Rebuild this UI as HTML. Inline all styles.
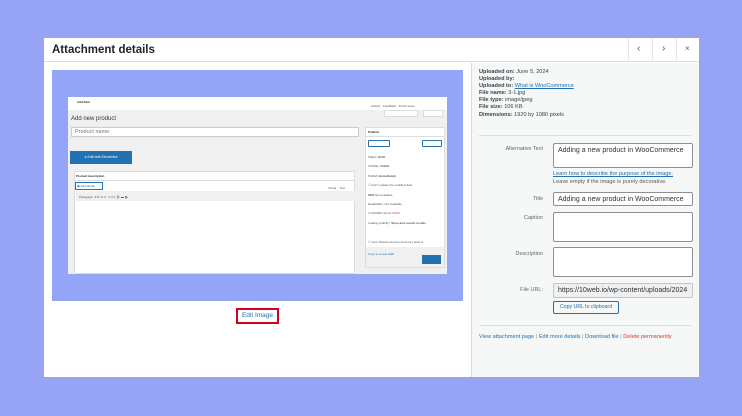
<!DOCTYPE html>
<html><head><meta charset="utf-8"><style>
*{box-sizing:border-box;margin:0;padding:0}
body{width:742px;height:416px;background:#97a4f6;font-family:"Liberation Sans",sans-serif;position:relative;overflow:hidden}
.a{position:absolute}
.modal{left:44px;top:38px;width:655px;height:339px;background:#fff}
.t{font-size:5.6px;color:#3c434a;white-space:nowrap}
.lbl{font-size:5.5px;color:#646970;text-align:right;width:60px;white-space:nowrap}
.in{background:#fff;border:1px solid #8c8f94;border-radius:2px;font-size:7px;color:#2c3338;padding:3px 4px;white-space:nowrap;overflow:hidden}
.g{background:#f0f0f1}
.w{background:#fff}
.s{font-size:3px;color:#50575e;white-space:nowrap}
</style></head><body>
<div class="a modal"></div>
<div class="a" style="left:44px;top:38px;width:655px;height:24px;border-bottom:1px solid #dcdcde;background:#fff"></div>
<div class="a" style="left:52px;top:44px;font-size:11.5px;font-weight:bold;color:#1d2327">Attachment details</div>
<div class="a" style="left:628px;top:38px;width:1px;height:24px;background:#e5e5e5"></div>
<div class="a" style="left:652px;top:38px;width:1px;height:24px;background:#e5e5e5"></div>
<div class="a" style="left:676px;top:38px;width:1px;height:24px;background:#e5e5e5"></div>
<div class="a" style="left:637px;top:43px;font-size:10px;color:#555">&#8249;</div>
<div class="a" style="left:662px;top:43px;font-size:10px;color:#555">&#8250;</div>
<div class="a" style="left:685px;top:44px;font-size:8px;color:#555">×</div>
<!-- right panel -->
<div class="a" style="left:471px;top:63px;width:228px;height:314px;background:#f6f7f7;border-left:1px solid #dcdcde"></div>
<div class="a t" style="left:479px;top:69px;line-height:7.1px">
<b>Uploaded on:</b> June 5, 2024<br><b>Uploaded by:</b><br><b>Uploaded to:</b> <span style="color:#2271b1;text-decoration:underline">What is WooCommerce</span><br><b>File name:</b> 3-1.jpg<br><b>File type:</b> image/jpeg<br><b>File size:</b> 106 KB<br><b>Dimensions:</b> 1920 by 1080 pixels</div>
<div class="a" style="left:479px;top:135px;width:212px;height:1px;background:#dcdcde"></div>
<div class="a lbl" style="left:483px;top:146px">Alternative Text</div>
<div class="a in" style="left:553px;top:143px;width:140px;height:25px">Adding a new product in WooCommerce</div>
<div class="a t" style="left:553px;top:171px;color:#2271b1;text-decoration:underline">Learn how to describe the purpose of the image.</div>
<div class="a t" style="left:553px;top:179px;color:#50575e">Leave empty if the image is purely decorative.</div>
<div class="a lbl" style="left:483px;top:196px">Title</div>
<div class="a in" style="left:553px;top:192px;width:140px;height:14px">Adding a new product in WooCommerce</div>
<div class="a lbl" style="left:483px;top:215px">Caption</div>
<div class="a in" style="left:553px;top:212px;width:140px;height:30px"></div>
<div class="a lbl" style="left:483px;top:251px">Description</div>
<div class="a in" style="left:553px;top:247px;width:140px;height:30px"></div>
<div class="a lbl" style="left:483px;top:287px">File URL:</div>
<div class="a in" style="left:553px;top:283px;width:140px;height:15px;background:#f0f0f1;border-color:#c3c4c7">https://10web.io/wp-content/uploads/2024</div>
<div class="a" style="left:553px;top:301px;width:66px;height:13px;border:1px solid #2271b1;border-radius:2px;background:#f6f7f7;font-size:5.2px;color:#2271b1;text-align:center;line-height:11px">Copy URL to clipboard</div>
<div class="a" style="left:479px;top:325px;width:212px;height:1px;background:#dcdcde"></div>
<div class="a t" style="left:479px;top:334px;font-size:5.6px;color:#2271b1">View attachment page <span style="color:#8c8f94">|</span> Edit more details <span style="color:#8c8f94">|</span> Download file <span style="color:#8c8f94">|</span> <span style="color:#d63638">Delete permanently</span></div>
<!-- image -->
<div class="a" style="left:52px;top:70px;width:411px;height:231px;background:#94a4f6"></div>
<div class="a g" style="left:68px;top:97px;width:379px;height:177px"></div>
<div class="a w" style="left:68px;top:97px;width:379px;height:13px"></div>
<div class="a s" style="left:77px;top:100px;font-weight:bold;color:#1d2327">Add New</div>
<div class="a s" style="left:371px;top:104px">Activity &nbsp; Feedback &nbsp; Finish setup</div>
<div class="a w" style="left:384px;top:110px;width:34px;height:7px;border:1px solid #ddd"></div>
<div class="a w" style="left:423px;top:110px;width:20px;height:7px;border:1px solid #ddd"></div>
<div class="a" style="left:71px;top:116px;font-size:6px;color:#333">Add new product</div>
<div class="a w" style="left:71px;top:127px;width:288px;height:10px;border:1px solid #ccc;font-size:5.5px;color:#777;padding:1px 3px">Product name</div>
<div class="a" style="left:70px;top:151px;width:62px;height:13px;background:#2271b1;font-size:3.5px;color:#fff;text-align:center;line-height:13px">● Edit with Elementor</div>
<div class="a w" style="left:74px;top:171px;width:281px;height:103px;border:1px solid #ddd"></div>
<div class="a s" style="left:76px;top:174px;font-weight:bold;color:#1d2327">Product description</div>
<div class="a" style="left:74px;top:180px;width:281px;height:1px;background:#ddd"></div>
<div class="a" style="left:75px;top:182px;width:28px;height:8px;border:1px solid #2271b1;font-size:3px;color:#2271b1;padding:1px">▣ Add Media</div>
<div class="a s" style="left:328px;top:186px">Visual &nbsp;&nbsp; Text</div>
<div class="a g" style="left:76px;top:191px;width:279px;height:10px"></div>
<div class="a s" style="left:79px;top:195px">Paragraph &nbsp;▾ B I ≡ ≡ “ ≡ ≡ ≡ ⛓ ▬ ▦</div>
<div class="a w" style="left:365px;top:127px;width:80px;height:141px;border:1px solid #ddd"></div>
<div class="a s" style="left:368px;top:130px;font-weight:bold;color:#1d2327">Publish</div>
<div class="a" style="left:365px;top:136px;width:80px;height:1px;background:#ddd"></div>
<div class="a" style="left:368px;top:140px;width:22px;height:7px;border:1px solid #2271b1;border-radius:1px"></div>
<div class="a" style="left:422px;top:140px;width:20px;height:7px;border:1px solid #2271b1;border-radius:1px"></div>
<div class="a s" style="left:368px;top:153px;line-height:9.4px">Status: <b>Draft</b><br>Visibility: <b>Public</b><br>Publish <b>immediately</b><br>☐ Don't update the modified date<br><b>SEO</b> Not available<br>Readability: Not available<br>⊙ AIOSEO Score <span style="color:#d63638">0/100</span><br>Catalog visibility: <b>Shop and search results</b><br><br>☐ Sync WooCommerce Inventory level to</div>
<div class="a g" style="left:366px;top:247px;width:78px;height:20px"></div>
<div class="a s" style="left:368px;top:252px;color:#2271b1">Copy to a new draft</div>
<div class="a" style="left:422px;top:255px;width:19px;height:9px;background:#2271b1"></div>
<!-- edit image -->
<div class="a" style="left:236px;top:308px;width:43px;height:16px;border:2px solid #d0021b;font-size:6.5px;color:#2271b1;text-align:center;line-height:12px">Edit Image</div>
</body></html>
